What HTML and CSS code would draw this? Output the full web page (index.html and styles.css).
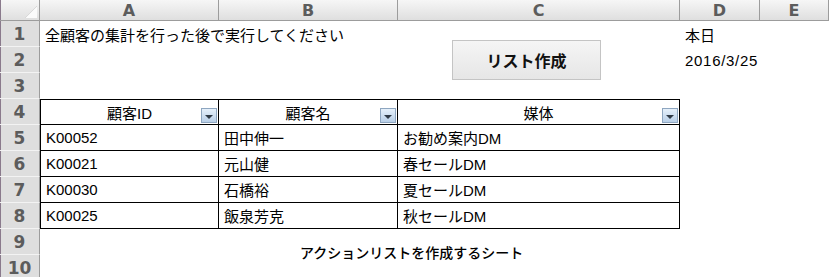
FILE: index.html
```html
<!DOCTYPE html>
<html lang="ja">

<head>
  <meta charset="UTF-8">
  <title>アクションリスト</title>
  <link rel="stylesheet" href="styles.css">
</head>

<body>
  <div class="sheet">
    <!-- заголовки столбцов -->
    <div class="corner"></div>
    <div class="col-head">A</div>
    <div class="col-head">B</div>
    <div class="col-head">C</div>
    <div class="col-head">D</div>
    <div class="col-head">E</div>

    <!-- 1 -->
    <div class="row-head">1</div>
    <div class="cell note">全顧客の集計を行った後で実行してください</div>
    <div class="cell"></div>
    <div class="cell button-cell">
      <button class="make-list">リスト作成</button>
    </div>
    <div class="cell">本日</div>
    <div class="cell"></div>

    <!-- 2 -->
    <div class="row-head">2</div>
    <div class="cell"></div>
    <div class="cell"></div>
    <div class="cell date">2016/3/25</div>
    <div class="cell"></div>

    <!-- 3 -->
    <div class="row-head">3</div>
    <div class="cell"></div>
    <div class="cell"></div>
    <div class="cell"></div>
    <div class="cell"></div>
    <div class="cell"></div>

    <!-- 4: шапка таблицы -->
    <div class="row-head">4</div>
    <div class="cell th first"><span>顧客ID</span><i class="filter"></i></div>
    <div class="cell th"><span>顧客名</span><i class="filter"></i></div>
    <div class="cell th"><span>媒体</span><i class="filter"></i></div>
    <div class="cell"></div>
    <div class="cell"></div>

    <!-- 5 -->
    <div class="row-head">5</div>
    <div class="cell td first">K00052</div>
    <div class="cell td">田中伸一</div>
    <div class="cell td">お勧め案内DM</div>
    <div class="cell"></div>
    <div class="cell"></div>

    <!-- 6 -->
    <div class="row-head">6</div>
    <div class="cell td first">K00021</div>
    <div class="cell td">元山健</div>
    <div class="cell td">春セールDM</div>
    <div class="cell"></div>
    <div class="cell"></div>

    <!-- 7 -->
    <div class="row-head">7</div>
    <div class="cell td first">K00030</div>
    <div class="cell td">石橋裕</div>
    <div class="cell td">夏セールDM</div>
    <div class="cell"></div>
    <div class="cell"></div>

    <!-- 8 -->
    <div class="row-head">8</div>
    <div class="cell td first">K00025</div>
    <div class="cell td">飯泉芳克</div>
    <div class="cell td">秋セールDM</div>
    <div class="cell"></div>
    <div class="cell"></div>

    <!-- 9 -->
    <div class="row-head">9</div>
    <div class="cell caption">アクションリストを作成するシート</div>
    <div class="cell"></div>
    <div class="cell"></div>

    <!-- 10 -->
    <div class="row-head">10</div>
    <div class="cell"></div>
    <div class="cell"></div>
    <div class="cell"></div>
    <div class="cell"></div>
    <div class="cell"></div>
  </div>
</body>

</html>
```

FILE: styles.css
```css
:root {
  --head-top: #f6f6f6;
  --head-bottom: #dfdfdf;
  --head-line: #9c9c9c;
  --row-bg: #dedede;
  --row-line: #f3f3f3;
  --head-text: #5c5c5c;
  --grid-text: #000;
}

body {
  margin: 0;
  background: #fff;
  overflow: hidden;
  font-family: "Liberation Sans", "Noto Sans CJK JP", sans-serif;
  color: var(--grid-text);
}

.sheet {
  display: grid;
  grid-template-columns: 40px 179px 179px 282px 80px 69px;
  grid-template-rows: 21px repeat(10, 26px);
}

/* заголовки */
.corner,
.col-head {
  box-sizing: border-box;
  background: linear-gradient(var(--head-top), var(--head-bottom));
  border-right: 1px solid var(--head-line);
  border-bottom: 1px solid var(--head-line);
}

.corner {
  display: grid;
  box-shadow: inset 1px 0 #8a7a8c;
}

.corner::after {
  content: "";
  width: 13px;
  height: 13px;
  justify-self: end;
  align-self: end;
  margin: 0 2px 2px 0;
  background: linear-gradient(135deg, transparent 50%, #b9b9b9 50%, #fbfbfb 58%);
}

.col-head {
  display: flex;
  align-items: center;
  justify-content: center;
  font-family: "DejaVu Sans", sans-serif;
  font-weight: bold;
  font-size: 16px;
  color: var(--head-text);
}

.row-head {
  box-sizing: border-box;
  display: flex;
  align-items: center;
  justify-content: center;
  background: var(--row-bg);
  border-right: 1px solid var(--head-line);
  border-bottom: 1px solid var(--row-line);
  box-shadow: inset 1px 0 #8a7a8c;
  font-family: "DejaVu Sans", sans-serif;
  font-weight: bold;
  font-size: 17px;
  color: var(--head-text);
}

/* ячейки */
.cell {
  box-sizing: border-box;
  display: flex;
  align-items: center;
  padding: 0 5px;
  font-size: 15px;
  white-space: nowrap;
  min-width: 0;
}

.note {
  overflow: visible;
}

.date {
  letter-spacing: 0.7px;
}

.button-cell {
  grid-row: span 2;
  align-items: flex-start;
  padding: 19px 0 0 54px;
}

.make-list {
  width: 149px;
  height: 40px;
  border: 1px solid #c4c4c4;
  border-radius: 0;
  background: linear-gradient(#f5f5f5, #e6e6e6);
  font-family: "Noto Sans CJK JP", sans-serif;
  font-weight: bold;
  font-size: 16px;
  color: #111;
  cursor: pointer;
}

/* таблица */
.th,
.td {
  border-right: 1px solid #000;
  border-bottom: 1px solid #000;
}

.first {
  border-left: 1px solid #000;
}

.th {
  display: grid;
  padding: 0;
  border-top: 1px solid #000;
}

.th span {
  grid-area: 1 / 1;
  justify-self: center;
  align-self: center;
}

.filter {
  grid-area: 1 / 1;
  justify-self: end;
  align-self: end;
  box-sizing: border-box;
  width: 16px;
  height: 15px;
  margin: 0 1px 1px 0;
  border: 1px solid #8ea6c0;
  background: linear-gradient(#e6f0fb, #b8cfe7);
  display: flex;
  align-items: center;
  justify-content: center;
}

.filter::after {
  content: "";
  border-left: 4px solid transparent;
  border-right: 4px solid transparent;
  border-top: 4px solid #2f3a46;
  margin-top: 2px;
}

.caption {
  grid-column: span 3;
  align-items: flex-start;
  padding: 13px 0 0 260px;
  font-family: "Noto Sans CJK JP", sans-serif;
  font-size: 14px;
  font-weight: 500;
}
```
